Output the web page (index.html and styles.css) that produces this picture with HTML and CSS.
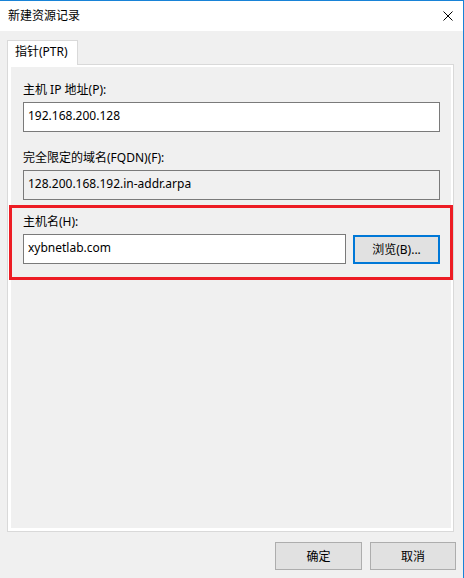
FILE: index.html
```html
<!DOCTYPE html>
<html lang="zh-CN">
  <head>
    <meta charset="UTF-8" />
    <meta name="viewport" content="width=device-width, initial-scale=1.0" />
    <title>新建资源记录</title>
    <link rel="stylesheet" href="styles.css">
  </head>
  <body>
    <div class="window">
      <!-- Title bar -->
      <div class="titlebar">
        <span class="title">新建资源记录</span>
        <svg class="close" width="10" height="10" viewBox="0 0 10 10">
          <path d="M0.5 0.5 L9.5 9.5 M9.5 0.5 L0.5 9.5" stroke="#000" stroke-width="1" fill="none" />
        </svg>
      </div>

      <div class="body">
        <div class="tabs">
          <div class="tab">指针(PTR)</div>
        </div>

        <div class="panel">
          <div class="field">
            <label class="label">主机 IP 地址(P):</label>
            <input class="textbox" type="text" value="192.168.200.128" />
          </div>

          <div class="field">
            <label class="label">完全限定的域名(FQDN)(F):</label>
            <input class="textbox readonly" type="text" value="128.200.168.192.in-addr.arpa" readonly />
          </div>

          <!-- Highlighted host name group -->
          <div class="highlight">
            <label class="label">主机名(H):</label>
            <div class="row">
              <input class="textbox host" type="text" value="xybnetlab.com" />
              <button class="btn browse">浏览(B)...</button>
            </div>
          </div>
        </div>

        <div class="footer">
          <button class="btn ok">确定</button>
          <button class="btn cancel">取消</button>
        </div>
      </div>
    </div>
  </body>
</html>
```

FILE: styles.css
```css
/* Plain dialog look */
body {
  margin: 0;
  background-color: #f0f0f0;
  font-family: "Noto Sans", "Noto Sans CJK SC", sans-serif;
  font-size: 12px;
  color: #000;
}

.window {
  box-sizing: border-box;
  width: 464px;
  height: 578px;
  border-top: 1px solid #1883d7;
  border-right: 1px solid #1883d7;
  display: flex;
  flex-direction: column;
}

.titlebar {
  height: 30px;
  background-color: #fff;
  display: flex;
  align-items: center;
  justify-content: space-between;
  padding-left: 8px;
}

.title {
  line-height: 16px;
}

.close {
  margin-right: 10px;
}

.body {
  flex: 1;
  display: flex;
  flex-direction: column;
  padding: 9px 9px 8px 7px;
}

.tabs {
  display: flex;
}

.tab {
  position: relative;
  z-index: 1;
  box-sizing: border-box;
  width: 71px;
  height: 25px;
  margin-bottom: -1px;
  border: 1px solid #d9d9d9;
  border-bottom: none;
  background-color: #fff;
  line-height: 22px;
  padding-left: 7px;
}

.panel {
  flex: 1;
  border: 1px solid #d9d9d9;
  /* white inner edge of the tab page */
  box-shadow: inset 0 0 0 2px #fff, inset 3px -3px 0 #fff;
  padding: 17px 13px 0 15px;
}

.field {
  margin-bottom: 18px;
}

.label {
  display: block;
  line-height: 16px;
  margin-bottom: 4px;
}

.textbox {
  box-sizing: border-box;
  display: block;
  width: 100%;
  height: 30px;
  margin: 0;
  padding: 0 4px 3px 4px;
  border: 1px solid #7a7a7a;
  border-radius: 0;
  background-color: #fff;
  font-family: inherit;
  font-size: 12px;
  color: #000;
  outline: none;
}

.textbox.readonly {
  background-color: #f0f0f0;
}

/* Red annotation frame around the host name */
.highlight {
  margin: -13px -13px 0 -14px;
  border: 3px solid #ed1c24;
  padding: 6px 10px 13px 11px;
}

.row {
  display: flex;
  align-items: center;
  gap: 7px;
}

.textbox.host {
  width: 323px;
}

.btn {
  box-sizing: border-box;
  margin: 0;
  padding: 0;
  border: 1px solid #adadad;
  border-radius: 0;
  background-color: #e1e1e1;
  font-family: inherit;
  font-size: 12px;
  color: #000;
}

.browse {
  width: 87px;
  height: 29px;
  border: 2px solid #0078d7;
}

.footer {
  display: flex;
  justify-content: flex-end;
  gap: 8px;
  padding-top: 10px;
  margin-right: -2px;
}

.ok {
  width: 87px;
  height: 28px;
}

.cancel {
  width: 86px;
  height: 28px;
}
```
